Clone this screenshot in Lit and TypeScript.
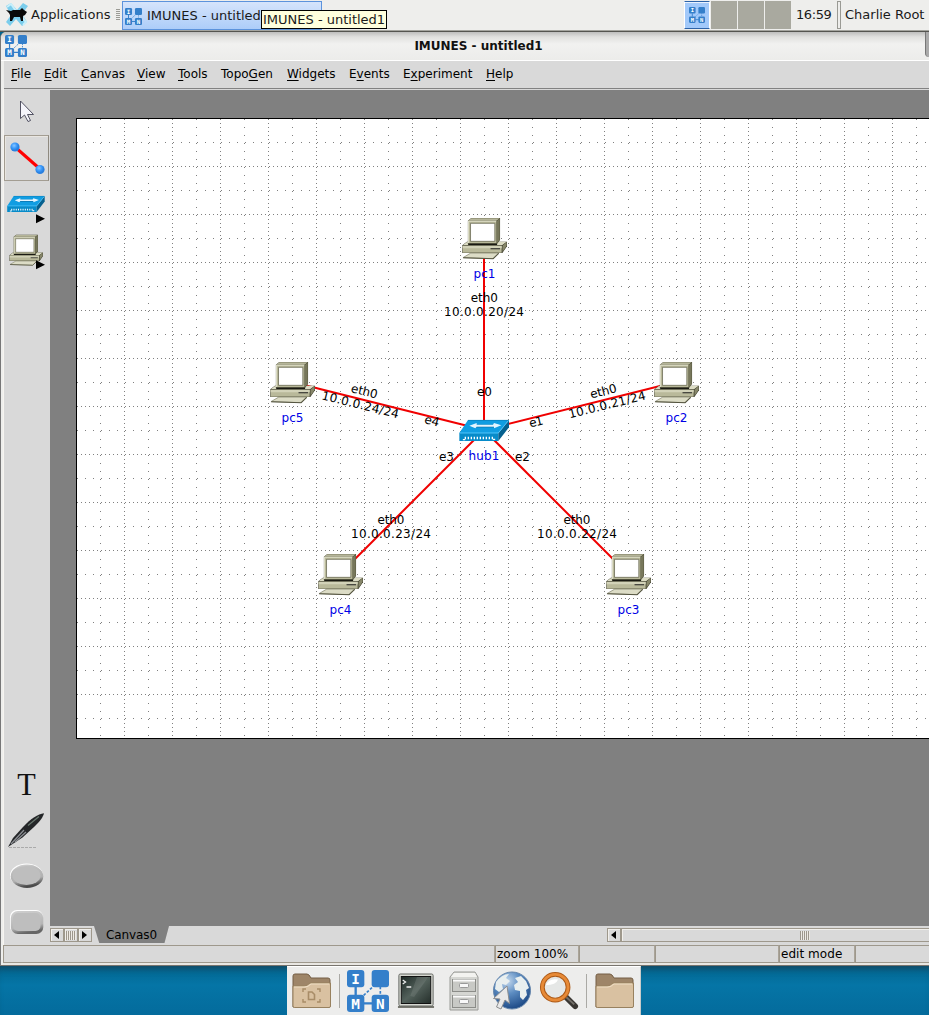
import { LitElement, html, svg, css } from "lit";
import { customElement } from "lit/decorators.js";

const logo = (size: number) => html`<svg width=${size} height=${size} viewBox="0 0 126 126">
  <path d="M26 50v26M50 100h28" stroke="#347fca" stroke-width="7"/>
  <path d="M50 76L80 48M100 50v26" stroke="#347fca" stroke-width="5" stroke-dasharray="8 5"/>
  <g fill="#347fca"><rect width="52" height="52" rx="9"/><rect x="74" width="52" height="52" rx="9"/><rect y="74" width="52" height="52" rx="9"/><rect x="74" y="74" width="52" height="52" rx="9"/></g>
  <g fill="#fff" font-family="DejaVu Sans Mono" font-weight="bold" font-size="43" text-anchor="middle"><text x="26" y="42">I</text><text x="26" y="116">M</text><text x="100" y="116">N</text></g>
</svg>`;

const pcShapes = svg`
  <path d="M80 110H202V124L188 144H66V121Z" fill="#303020"/>
  <path d="M81 110H201L187 121H67Z" fill="#dcdcc4"/>
  <path d="M67 122H186V143H67Z" fill="#b9b99a"/>
  <path d="M67 123H186V130H67Z" fill="#d2d2b8"/>
  <path d="M188 122L201 111V123L188 142Z" fill="#87876a"/>
  <path d="M152 131H181" stroke="#222" stroke-width="3"/>
  <path d="M92 144H177L160 161L68 158Z" fill="#dcdcc6" stroke="#77775f" stroke-width="2"/>
  <path d="M69 158L160 161L177 145" fill="none" stroke="#555540" stroke-width="3"/>
  <path d="M83 47L93 39H181V105L171 118H83Z" fill="#45452f"/>
  <path d="M84 47L93 40H180L170 47Z" fill="#b5b599"/>
  <path d="M171 48L180 41V104L171 116Z" fill="#77775b"/>
  <path d="M84 48H170V115H84Z" fill="#b9b99a"/>
  <path d="M85 114V49H169" fill="none" stroke="#dedec9" stroke-width="3"/>
  <path d="M91 55H165V109H91Z" fill="#fff" stroke="#55553c" stroke-width="2"/>
  <path d="M84 118H172" stroke="#191912" stroke-width="4"/>`;

const hubShapes = svg`
  <path d="M84 150H207L175 189H58Z" fill="#109de2"/>
  <path d="M58 189H175V213H58Z" fill="#078bc9"/>
  <path d="M175 189L207 150V172L175 213Z" fill="#05608f"/>
  <path d="M59 189H175L206 151" fill="none" stroke="#53c5fa" stroke-width="3"/>
  <path d="M84 151H206" stroke="#0879b2" stroke-width="2"/>
  <path d="M72 211V204H162V211" fill="none" stroke="#fff" stroke-width="7" stroke-dasharray="4 5"/>
  <path d="M104 168H162" stroke="#055f91" stroke-width="7"/>
  <path d="M88 167L110 159V164H159L162 159L184 166L162 175V170H110L106 175Z" fill="#e4f5ff"/>`;

const SANS = css`font-family: "DejaVu Sans", sans-serif; font-size: 12px;`;

@customElement("topo-canvas")
class TopoCanvas extends LitElement {
  static styles = css`
    :host { display: block; background: #808080; overflow: hidden; }
    svg { display: block; ${SANS} }
    .name { fill: #0000e6; }
  `;
  label(t: string, x: number, y: number, w: number, angle = 0, cls = "") {
    return svg`<text class=${cls} x=${x - w / 2} y=${y + 4.4} textLength=${w} transform=${`rotate(${angle} ${x} ${y})`}>${t}</text>`;
  }
  render() {
    const cols = Array.from({ length: 35 }, (_, i) => 100 + i * 24);
    const rows = Array.from({ length: 25 }, (_, i) => 142 + i * 24);
    const pcs: [string, number, number][] = [["pc1", 484, 238], ["pc2", 676, 382], ["pc3", 628, 574], ["pc4", 340, 574], ["pc5", 292, 382]];
    return html`<svg width="879" height="836" viewBox="50 90 879 836">
      <rect x="76.5" y="118.5" width="900" height="620" fill="#fff" stroke="#000"/>
      <g stroke="#808080" shape-rendering="crispEdges">
        ${cols.map((x, i) => svg`<path d=${`M${x + 0.5} 119V738`} stroke-dasharray=${i % 2 ? "1 3" : "1 7"}/>`)}
        ${rows.map((y, i) => svg`<path d=${`M77 ${y + 0.5}H929`} stroke-dasharray=${i % 2 ? "1 3" : "1 7"}/>`)}
      </g>
      <g stroke="#f00000" stroke-width="2">
        ${pcs.map(([, x, y]) => svg`<path d=${`M484 430L${x} ${y}`}/>`)}
      </g>
      ${pcs.map(([n, x, y]) => svg`<svg x=${x - 23} y=${y - 21} width="46.6" height="42.67" viewBox="62 36 142 128" preserveAspectRatio="none">${pcShapes}</svg>
        ${this.label(n, x + 0.5, y + 35.5, 22, 0, "name")}`)}
      <svg x="458.67" y="419.33" width="51" height="22.33" viewBox="56 148 153 67">${hubShapes}</svg>
      ${this.label("hub1", 484, 455.5, 31, 0, "name")}
      ${this.label("eth0", 484.3, 297.5, 27)}${this.label("10.0.0.20/24", 484, 311.5, 80)}
      ${this.label("e0", 484.5, 391.5, 15)}
      ${this.label("eth0", 364.5, 391, 27, 14)}${this.label("10.0.0.24/24", 360.5, 404.5, 79, 14)}
      ${this.label("e4", 432, 420.5, 15, 14)}
      ${this.label("eth0", 603.3, 391, 27, -14)}${this.label("10.0.0.21/24", 607, 404.5, 79, -14)}
      ${this.label("e1", 536, 421.5, 14, -14)}
      ${this.label("e3", 446.5, 456.5, 15)}${this.label("e2", 522.5, 456.5, 15)}
      ${this.label("eth0", 391, 519.5, 27)}${this.label("10.0.0.23/24", 391, 533.5, 80)}
      ${this.label("eth0", 577, 519.5, 27)}${this.label("10.0.0.22/24", 577, 533.5, 80)}
    </svg>`;
  }
}

@customElement("tool-bar")
class ToolBar extends LitElement {
  static styles = css`
    :host { display: flex; flex-direction: column; background: #d9d9d9; }
    .cell { box-sizing: border-box; width: 46px; height: 46px; flex: none; }
    .on { width: 45px; border: 1px solid #a39d92; border-right-color: #8f8a80; box-shadow: inset 1px 1px #e9e6e1; }
    .on svg { margin: -1px; }
    .fill { flex: 1; }
    svg { display: block; }
  `;
  cell(content: unknown, on = false) {
    return html`<div class="cell ${on ? "on" : ""}"><svg width="46" height="46" viewBox="0 0 46 46">${content}</svg></div>`;
  }
  render() {
    const more = svg`<path d="M32 33.2V42.2L41 37.7Z"/>`;
    return html`
      ${this.cell(svg`<path d="M16.5 12V29.5L20.5 26L24 32.5L26.5 31.5L23.5 25.5H29.5Z" fill="#f5f5fb" stroke="#424253" stroke-width=".9"/>`)}
      ${this.cell(svg`<defs><radialGradient id="b" cx=".4" cy=".35"><stop offset="0" stop-color="#8bc7ff"/><stop offset=".6" stop-color="#3b9afb"/><stop offset="1" stop-color="#2a80e0"/></radialGradient></defs>
        <path d="M11 12L36 34" stroke="#f00" stroke-width="3"/><circle cx="11" cy="12" r="4.6" fill="url(#b)"/><circle cx="36" cy="34.5" r="4.6" fill="url(#b)"/>`, true)}
      ${this.cell(svg`<svg x="2.7" y="14.5" width="38.5" height="17" viewBox="56 148 153 67" preserveAspectRatio="none">${hubShapes}</svg>${more}`)}
      ${this.cell(svg`<svg x="4.5" y="7" width="35" height="32" viewBox="62 36 142 128" preserveAspectRatio="none">${pcShapes}</svg>${more}`)}
      <div class="fill"></div>
      ${this.cell(svg`<text x="22.5" y="33.6" text-anchor="middle" font-family="Liberation Serif" font-size="32" textLength="18.5" lengthAdjust="spacingAndGlyphs" fill="#111">T</text>`)}
      ${this.cell(svg`<path d="M5 40.5H33" stroke="#aaa" stroke-dasharray="3 1"/>
        <path d="M4 40L9 31L19 20C27 11.5 34 7 40 6.3C39 10 36.5 14 30 20L18.500 30.500Z" fill="#242628"/><path d="M7 37L20 23M11 35L22 25" stroke="#8b8e93" stroke-width="1.300"/><path d="M24 18.500L35 9.500" stroke="#69786f" stroke-width="1.2"/>`)}
      ${this.cell(svg`<defs><linearGradient id="g" x1="0" y1="0" x2=".25" y2="1"><stop offset="0" stop-color="#d6d6d6"/><stop offset=".25" stop-color="#bfbfbf"/><stop offset=".72" stop-color="#b0b0b0"/><stop offset="1" stop-color="#4a4a4a"/></linearGradient></defs>
        <ellipse cx="22.5" cy="22.5" rx="16.5" ry="12" fill="#fff"/><ellipse cx="23" cy="23.2" rx="16.3" ry="11.7" fill="url(#g)"/><ellipse cx="22.5" cy="22.5" rx="14" ry="9.5" fill="#bebebe"/>`)}
      ${this.cell(svg`<rect x="6" y="11" width="33" height="23.5" rx="7" fill="#fff"/><rect x="6.8" y="12" width="32.5" height="23" rx="7" fill="url(#g2)"/><defs><linearGradient id="g2" x1="0" y1="0" x2=".25" y2="1"><stop offset="0" stop-color="#d0d0d0"/><stop offset=".75" stop-color="#b5b5b5"/><stop offset="1" stop-color="#666"/></linearGradient></defs><rect x="9" y="14" width="27.5" height="18" rx="5" fill="#bebebe"/>`)}
    `;
  }
}

const folder = (mark: boolean) => html`<svg class="folder" width="40" height="36" viewBox="0 0 40 36">
  <path d="M1 34V3Q1 1 3 1H15Q17 1 19 5H36Q38 5 38 7V34Z" fill="#9e8568" stroke="#755f46"/>
  <path d="M1 13H12Q15 13 18 10H38.5V33Q38.5 34.5 37 34.5H2.5Q1 34.5 1 33Z" fill="#d9c1a1" stroke="#98815f"/>
  <path d="M2 14H13Q16 14 19 11H37" fill="none" stroke="#efdec5"/>
  ${mark ? svg`<g fill="none" stroke="#a88c67" stroke-width="1.4"><path d="M11 19V16H14M25 16H28V19M11 26V29H14M25 29H28V26"/><path d="M16.500 19H20L22.500 21.500V26.500H16.500Z" stroke-width="1.600"/></g>` : ""}
</svg>`;

@customElement("app-dock")
class AppDock extends LitElement {
  static styles = css`
    :host { display: grid; grid-template-columns: 50px 5px 52px 44px 51px 45px 49px 6px 51px; box-sizing: border-box; width: 354px; height: 49px; padding-top: 2px; background: #ededec; border-top: 1px solid #fff; border-right: 1px solid #c9cbca; }
    .slot { height: 44px; display: flex; align-items: center; justify-content: center; }
    .rule { width: 1px; height: 34px; background: #aaa9a5; }
    svg { display: block; flex: none; }
    .folder { margin-top: -1px; }
  `;
  render() {
    return html`
      <div class="slot">${folder(true)}</div>
      <div class="slot"><div class="rule"></div></div>
      <div class="slot">${logo(42)}</div>
      <div class="slot"><svg width="38" height="36" viewBox="0 0 40 36" preserveAspectRatio="none">
        <defs><linearGradient id="t" x2="1" y2="1"><stop offset="0" stop-color="#1e2926"/><stop offset=".5" stop-color="#53615b"/><stop offset="1" stop-color="#242e2a"/></linearGradient></defs>
        <path d="M1 33H39V35H1Z" fill="#77776f"/><rect x="2" y="1" width="36" height="32" rx="1.5" fill="#d6d8d1" stroke="#62645f"/><rect x="4.5" y="3.5" width="31" height="27" fill="url(#t)" stroke="#111"/>
        <path d="M21 4H33L18 24L14 23Z" fill="#87918b" opacity=".28"/><path d="M6 7L9 9L6 11M10 14H15" fill="none" stroke="#eee" stroke-width="1.3"/></svg></div>
      <div class="slot"><svg width="34" height="42" viewBox="0 0 34 42">
        <path d="M3 7L7 2H28L31 7V40H3Z" fill="#d5d6d2" stroke="#999a96"/><path d="M4 7L7 3H28L30 7Z" fill="#f3f3f0"/>
        <g fill="#c8c9c5" stroke="#8b8c88"><rect x="5.5" y="9.5" width="23" height="12"/><rect x="5.5" y="25.5" width="23" height="12"/></g><path d="M6 10.5H28M6 26.5H28" stroke="#fafafa" stroke-width="2"/><g fill="#f8f8f8" stroke="#999"><rect x="12.5" y="13.5" width="9" height="4" rx="1"/><rect x="12.5" y="29.5" width="9" height="4" rx="1"/></g></svg></div>
      <div class="slot"><svg width="42" height="42" viewBox="0 0 42 42">
        <defs><radialGradient id="e" cx=".38" cy=".25" r=".75"><stop offset="0" stop-color="#c3d8ed"/><stop offset=".45" stop-color="#5d8dc2"/><stop offset="1" stop-color="#1f4c88"/></radialGradient></defs>
        <circle cx="21" cy="20.5" r="18.5" fill="url(#e)" stroke="#6485ab"/>
        <path d="M5 12Q11 4 18 4L15 8L19 11L15 15L11 14L12 19L8 22L4 19ZM24 8L30 6L35 11L38 18L35 20L36 25L32 30L29 27L29 21L24 20L23 15L27 12Z" fill="#e9efef"/>
        <path d="M16 16L18.500 33.500L14 30L10 39L5.500 37L9 29L2.500 28.500Z" fill="#e9e9e9" stroke="#8b8d8f"/></svg></div>
      <div class="slot"><svg width="40" height="40" viewBox="0 0 42 42">
        <path d="M28 27L38 37" stroke="#393632" stroke-width="6" stroke-linecap="round"/><path d="M27 26L37 35" stroke="#74706a" stroke-width="2"/>
        <circle cx="17" cy="17" r="13.5" fill="#e5e7e6" stroke="#ad5a17" stroke-width="5"/><circle cx="17" cy="17" r="13.5" fill="none" stroke="#e78a37" stroke-width="3"/><path d="M7 15Q11 7 20 9Q18 15 7 15" fill="#fff"/></svg></div>
      <div class="slot"><div class="rule"></div></div>
      <div class="slot">${folder(false)}</div>`;
  }
}

@customElement("app-root")
class AppRoot extends LitElement {
  static styles = css`
    :host { display: flex; flex-direction: column; width: 929px; height: 1015px; overflow: hidden; position: relative; color: #1a1a1a; ${SANS} background: linear-gradient(#02658f 966px, #0575a6 985px, #046b9c); white-space: nowrap; }
    svg { display: block; flex: none; }
    .panel { height: 32px; box-sizing: border-box; flex: none; display: flex; background: #eeeeec; border-bottom: 1px solid #555550; box-shadow: inset 0 -1px #a5a59f; }
    .mouse { margin: 3px 3px 0 5px; }
    .panel .t { line-height: 29px; font-size: 13px; flex: none; }
    .apps { width: 85px; }
    .grip { width: 4px; height: 11px; margin: 9px 2px 0 0; flex: none; background: repeating-linear-gradient(#9b9b95 0 1px, #eeeeec 1px 2px); }
    .task { box-sizing: border-box; flex: none; width: 200px; height: 29px; margin-top: 1px; padding: 5px 0 0 2px; border: 1px solid #5c93dc; background: linear-gradient(#d5e4fb, #adcdf9); display: flex; gap: 5px; }
    .task svg { margin-top: 1px; }
    .panel .task .t { line-height: 17px; }
    .pager { display: flex; gap: 1px; margin: 1px 0 0 362px; flex: none; }
    .desk { width: 26px; height: 28px; background: #a9a99f; }
    .cur { box-sizing: border-box; background: #a2c9fa; border: 1px solid #fff; border-top-color: #2c62a7; border-bottom-color: #2c62a7; box-shadow: inset 0 1px #e8f2ff; padding: 5px 0 0 4px; }
    .panel .clock { width: 36px; margin-left: 5px; letter-spacing: -.4px; }
    .sep { box-sizing: border-box; flex: none; width: 4px; height: 28px; border: 1px solid #9a9a94; margin: 1px 4px 0 5px; }
    .tip { position: absolute; left: 261px; top: 10px; width: 126px; height: 19px; box-sizing: border-box; border: 1px solid #000; background: #ffffdd; line-height: 17px; padding-left: 1px; font-size: 13px; }
    .window { flex: none; height: 934px; box-sizing: border-box; display: flex; flex-direction: column; border-left: 1px solid #777; background: #eeeeec; border-bottom: 1px solid #78746e; border-top-left-radius: 6px; overflow: hidden; }
    .title { height: 28px; flex: none; display: flex; background: linear-gradient(#bebebd, #e1e1df 5px, #f1f1f0 12px, #ececea); border-bottom: 1px solid #fff; }
    .title svg { margin: 3px 0 0 4px; }
    .cap { width: 903px; flex: none; text-align: center; box-sizing: border-box; font-weight: bold; font-size: 12px; line-height: 28px; color: #111; }
    .btn { width: 5px; height: 25px; box-sizing: border-box; flex: none; margin-left: -5px; border-left: 1px solid #777; border-bottom-left-radius: 4px; background: #aaa; }
    .menu { height: 27px; flex: none; margin-left: 3px; display: flex; background: #d9d9d9; padding-left: 7px; border-bottom: 1px solid #828282; line-height: 26px; color: #000; }
    u { text-underline-offset: 2px; }
    .body { flex: 1; margin-left: 2px; display: grid; grid-template-columns: 46px 1fr; grid-template-rows: 836px 19px; background: #d9d9d9; padding-top: 1px; border-left: 1px solid #f6f4f0; box-sizing: border-box; min-height: 0; }
    tool-bar { grid-row: 1 / 3; margin-top: -1px; }
    .tabs { display: flex; height: 19px; }
    .mini { display: flex; margin-top: 2px; width: 42px; height: 14px; box-sizing: border-box; }
    .bx { box-sizing: border-box; height: 14px; border: 1px solid #9e988c; display: flex; align-items: center; justify-content: center; box-shadow: inset 1px 1px #f1efeb; flex: none; }
    .ar { width: 14px; }
    .mini .th { flex: 1; }
    .ridge { width: 10px; height: 9px; background: repeating-linear-gradient(90deg, #9d978c 0 1px, #eeeae4 1px 2px); }
    .tab { width: 75px; height: 17px; margin-left: 2px; flex: none; background: #808080; clip-path: polygon(0 0, 100% 0, 94% 100%, 7% 100%); text-align: center; line-height: 18px; color: #000; letter-spacing: -.1px; }
    .hs { display: flex; margin: 2px 0 0 438px; width: 370px; flex: none; }
    .track { width: 368px; }
    .status { height: 20px; flex: none; display: flex; margin-left: 2px; background: #e9e7e3; color: #000; }
    .st { box-sizing: border-box; height: 18px; flex: none; border: 1px solid #9e988c; border-right-color: #aaa499; background: #d9d9d9; line-height: 17px; padding-left: 1px; letter-spacing: .05px; }
    .shelf { flex: none; display: flex; justify-content: flex-start; padding-left: 287px; height: 49px; box-shadow: inset 0 7px 7px -5px #17455b; }
  `;
  render() {
    const menus: [string, string, string, number][] = [["", "F", "ile", 33], ["", "E", "dit", 37], ["", "C", "anvas", 56], ["", "V", "iew", 41], ["", "T", "ools", 43], ["Topo", "G", "en", 66], ["", "W", "idgets", 62], ["E", "v", "ents", 54], ["E", "x", "periment", 83], ["", "H", "elp", 40]];
    const left = html`<svg width="6" height="8"><path d="M5 0V8L0 4Z"/></svg>`;
    const right = html`<svg width="6" height="8"><path d="M0 0V8L5 4Z"/></svg>`;
    const status: [string, number][] = [["", 492], ["zoom 100%", 84], ["", 76], ["", 124], ["edit mode", 76], ["", 80]];
    return html`
      <div class="panel">
        <svg class="mouse" width="23" height="23" viewBox="0 0 23 23"><path d="M1 3L6 0L12 7L18 0L23 3L17 11L22 19L17 23L11 16L5 23L1 19L6 12Z" fill="#7bcdec"/><path d="M2 4L6 1L11 8M18 22L21 19L16 13" fill="none" stroke="#c8effa" stroke-width="2"/><path d="M1 7L6 8L8 7H15L17 5L19 7L22 9L20 12L18 13L18 18H16L15 14H9L7 18H5L5 12L4 10Z" fill="#090909"/></svg>
        <span class="t apps">Applications</span><div class="grip"></div>
        <div class="task">${logo(17)}<span class="t">IMUNES - untitled1</span></div>
        <div class="pager"><div class="desk cur">${logo(16)}</div><div class="desk"></div><div class="desk"></div><div class="desk"></div></div>
        <span class="t clock">16:59</span><div class="sep"></div><span class="t">Charlie Root</span>
      </div>
      <div class="window">
        <div class="title">${logo(22)}<div class="cap">IMUNES - untitled1</div><div class="btn"></div></div>
        <div class="menu">${menus.map(([a, b, c, w]) => html`<span style="width:${w}px">${a}<u>${b}</u>${c}</span>`)}</div>
        <div class="body">
          <tool-bar></tool-bar>
          <topo-canvas></topo-canvas>
          <div class="tabs">
            <div class="mini"><div class="bx ar">${left}</div><div class="bx th"><div class="ridge"></div></div><div class="bx ar">${right}</div></div>
            <div class="tab">Canvas0</div>
            <div class="hs"><div class="bx ar">${left}</div><div class="bx track"><div class="ridge"></div></div></div>
          </div>
        </div>
        <div class="status">${status.map(([t, w]) => html`<div class="st" style="width:${w}px">${t}</div>`)}</div>
      </div>
      <div class="shelf"><app-dock></app-dock></div>
      <div class="tip">IMUNES - untitled1</div>`;
  }
}
